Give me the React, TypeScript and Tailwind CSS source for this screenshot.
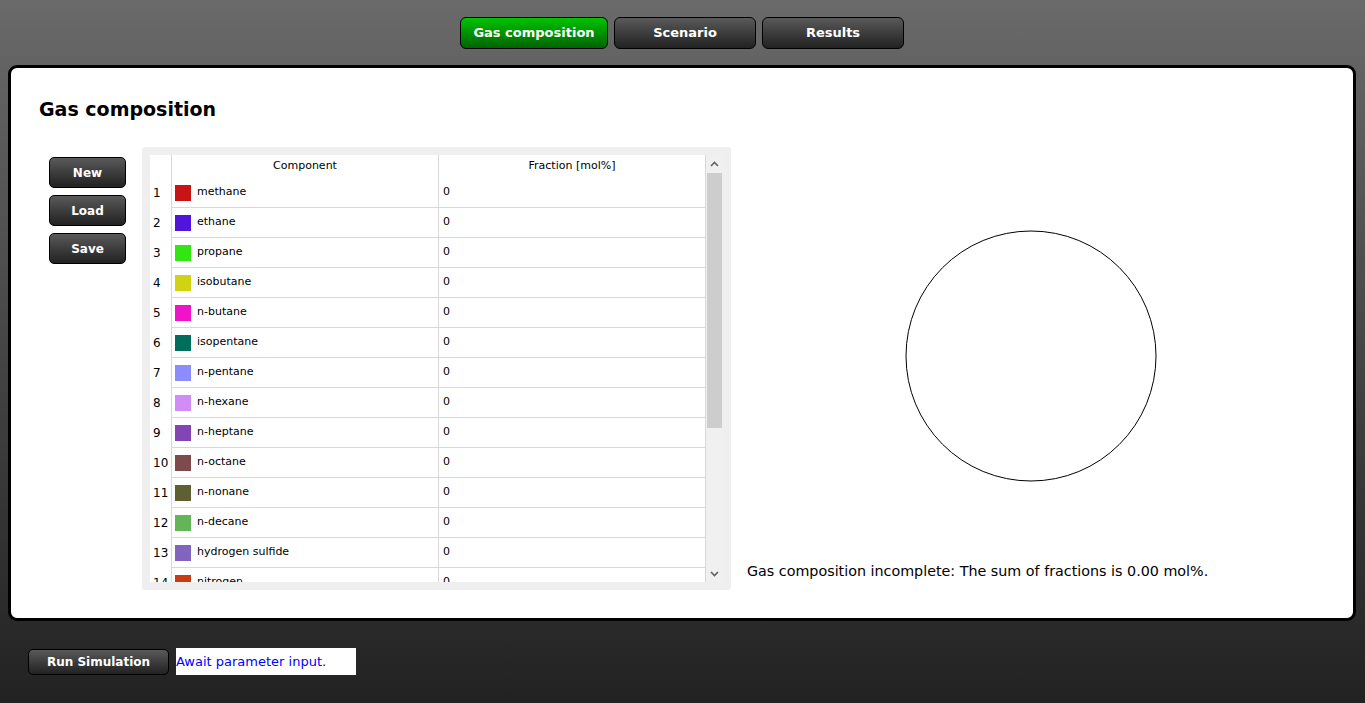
const rows = [
  { name: "methane", color: "#c81414" },
  { name: "ethane", color: "#5014dc" },
  { name: "propane", color: "#32e614" },
  { name: "isobutane", color: "#d2d214" },
  { name: "n-butane", color: "#f014c8" },
  { name: "isopentane", color: "#006e5a" },
  { name: "n-pentane", color: "#8c8cff" },
  { name: "n-hexane", color: "#d28cf5" },
  { name: "n-heptane", color: "#8246b4" },
  { name: "n-octane", color: "#7d4b4b" },
  { name: "n-nonane", color: "#5f5f32" },
  { name: "n-decane", color: "#64b45a" },
  { name: "hydrogen sulfide", color: "#8264be" },
  { name: "nitrogen", color: "#c83c14" },
]

const darkBtn =
  "flex items-center justify-center rounded-[5px] border border-black bg-gradient-to-b from-[#5a5a5a] to-[#222222] font-bold text-white"

function Tab({ label, active }: { label: string; active?: boolean }) {
  return (
    <div
      className={
        active
          ? "flex h-[32px] w-[148px] items-center justify-center rounded-[6px] border border-black bg-gradient-to-b from-[#00c400] to-[#006400] text-[13px] font-bold text-white"
          : "flex h-[32px] w-[142px] items-center justify-center rounded-[6px] border border-black bg-gradient-to-b from-[#5a5a5a] to-[#222222] text-[13px] font-bold text-white"
      }
    >
      {label}
    </div>
  )
}

function CompositionTable() {
  return (
    <div className="flex h-[443px] w-[589px] rounded-[3px] bg-[#efefef] p-[8px]">
      <div className="flex flex-1 overflow-hidden bg-white">
        <div className="flex-1 overflow-hidden">
          <div className="flex h-[23px] text-[11px] text-black">
            <div className="w-[22px] border-r border-[#d8d8d8]" />
            <div className="flex w-[267px] items-center justify-center border-r border-[#d8d8d8]">
              Component
            </div>
            <div className="flex flex-1 items-center justify-center">
              Fraction [mol%]
            </div>
          </div>
          {rows.map((r, i) => (
            <div key={r.name} className="flex h-[30px] text-[11px] text-black">
              <div className="flex w-[22px] items-center border-r border-[#d8d8d8] pl-[3px] text-[12px]">
                {i + 1}
              </div>
              <div className="flex w-[267px] items-center gap-[6px] border-b border-r border-[#d8d8d8] pl-[3px]">
                <span
                  className="h-[16px] w-[16px] shrink-0"
                  style={{ background: r.color }}
                />
                {r.name}
              </div>
              <div className="flex flex-1 items-center border-b border-[#d8d8d8] pl-[4px]">
                0
              </div>
            </div>
          ))}
        </div>
        <div className="flex w-[18px] flex-col items-center border-l border-[#d8d8d8] bg-[#f0f0f0]">
          <svg width="9" height="6" viewBox="0 0 9 6" className="mt-[6px]">
            <path d="M1 5 L4.5 1.5 L8 5" stroke="#606060" strokeWidth="1.6" fill="none" />
          </svg>
          <div className="mt-[6px] h-[255px] w-[15px] bg-[#cdcdcd]" />
          <div className="flex-1" />
          <svg width="9" height="6" viewBox="0 0 9 6" className="mb-[5px]">
            <path d="M1 1 L4.5 4.5 L8 1" stroke="#606060" strokeWidth="1.6" fill="none" />
          </svg>
        </div>
      </div>
    </div>
  )
}

export default function App() {
  return (
    <div className="flex h-[703px] w-full flex-col bg-gradient-to-b from-[#6a6a6a] via-[#454545] to-[#222222] font-['DejaVu_Sans',sans-serif]">
      <div className="flex h-[65px] items-start justify-center gap-[6px] pt-[17px] pr-[1px]">
        <Tab label="Gas composition" active />
        <Tab label="Scenario" />
        <Tab label="Results" />
      </div>

      <div className="mx-[8px] mr-[9px] flex h-[556px] flex-col rounded-[9px] border-[3px] border-black bg-white">
        <h1 className="pl-[28px] pt-[28px] text-[19px] font-bold leading-[26px] text-black">
          Gas composition
        </h1>
        <div className="mt-[25px] flex">
          <div className="ml-[38px] mt-[10px] flex w-[77px] flex-col gap-[7px]">
            <div className={`${darkBtn} h-[31px] text-[12px]`}>New</div>
            <div className={`${darkBtn} h-[31px] text-[12px]`}>Load</div>
            <div className={`${darkBtn} h-[31px] text-[12px]`}>Save</div>
          </div>
          <div className="ml-[16px]">
            <CompositionTable />
          </div>
          <div className="flex flex-col pl-[16px]">
            <svg width="252" height="252" viewBox="0 0 252 252" className="ml-[158px] mt-[83px]">
              <circle cx="126" cy="126" r="125" fill="white" stroke="black" strokeWidth="1" />
            </svg>
            <p className="mt-[80px] text-[14.3px] leading-[18px] text-black">
              Gas composition incomplete: The sum of fractions is 0.00 mol%.
            </p>
          </div>
        </div>
      </div>

      <div className="flex items-center gap-[7px] pl-[28px] pt-[27px]">
        <div className={`${darkBtn} h-[26px] w-[141px] text-[12px]`}>Run Simulation</div>
        <div className="flex h-[27px] w-[180px] items-center bg-white text-[13px] text-[#0000ff]">
          Await parameter input.
        </div>
      </div>
    </div>
  )
}
